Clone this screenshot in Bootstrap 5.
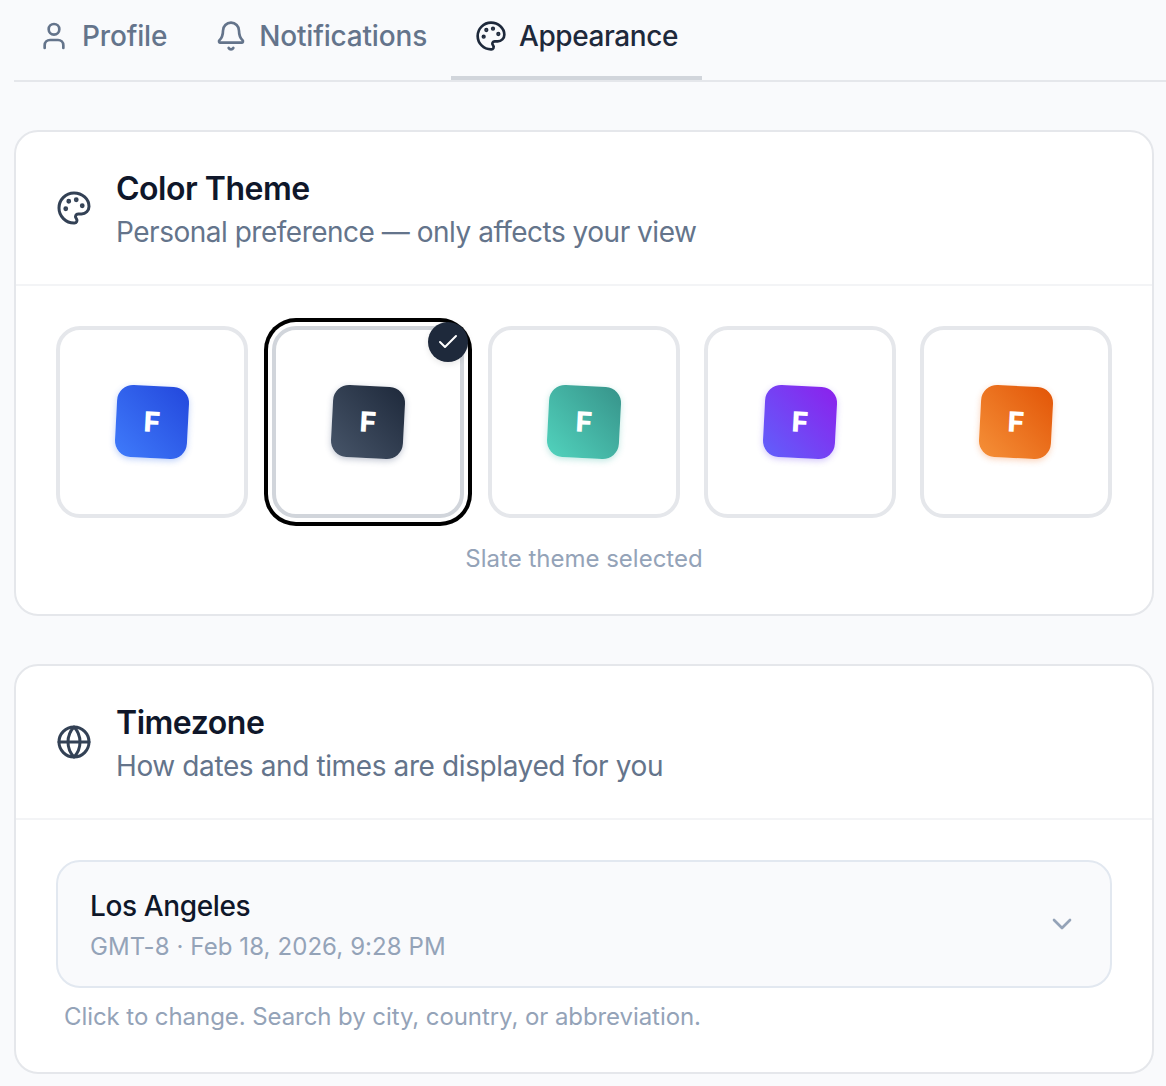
<!DOCTYPE html>
<html lang="en">
<head>
<meta charset="utf-8">
<meta name="viewport" content="width=device-width, initial-scale=1">
<title>Appearance settings</title>
<link href="https://cdn.jsdelivr.net/npm/bootstrap@5.3.0/dist/css/bootstrap.min.css" rel="stylesheet">
<style>
body{background:#f9fafc;font-family:Inter,"Liberation Sans",sans-serif;color:#0f172a;overflow:hidden;padding-left:14px}
.ico{width:32px;height:32px;fill:none;stroke:currentColor;stroke-width:2;stroke-linecap:round;stroke-linejoin:round;flex:none;display:block}
.ico-lg{width:36px;height:36px;color:#334155}
.tab-bar{border-bottom:2px solid #e5e7eb;height:82px;flex-wrap:nowrap}
.tab-item{padding:16px 24px 20px;gap:12px;border:0;border-bottom:4px solid transparent;border-radius:0;font-size:28px;line-height:40px;font-weight:500;color:#64748b;background:none;letter-spacing:-.18px}
.tab-item.active{color:#1e293b;border-bottom-color:#d1d5db;letter-spacing:-.42px}
.panel{width:1140px;border:2px solid #e5e7eb;border-radius:24px;margin-top:48px;background:#fff}
.panel-head{padding:32px 40px;gap:24px;border-bottom:2px solid #f3f4f6}
.panel-main{padding:40px}
.t-title{font-size:32px;line-height:48px;font-weight:600;margin:0;padding-top:1px;height:48px;letter-spacing:-.48px}
.t-sub{font-size:28px;line-height:40px;color:#64748b;margin:0;letter-spacing:-.39px}
.t-sub.tight{letter-spacing:-.49px}
.t-hint{font-size:24px;line-height:32px;color:#94a3b8;margin:0;padding-top:1px;height:32px}
.t-note{letter-spacing:-.075px;margin-top:12px}
.swatches{gap:24px}
.swatch{width:192px;height:192px;border:4px solid #e5e7eb;border-radius:24px;background:#fff;padding:0}
.swatch.chosen{border-color:#d1d5db;box-shadow:0 0 0 4px #fff,0 0 0 8px #000}
.logo-tile{width:72px;height:72px;border-radius:16px;transform:rotate(3deg);color:#fff;font-size:28px;line-height:1;font-weight:800;background:linear-gradient(to top right,var(--a),var(--b));box-shadow:0 2px 6px var(--s)}
.tile-blue{--a:#3f7bfb;--b:#2347dc;--s:rgba(37,99,235,.3)}
.tile-slate{--a:#475569;--b:#1e293b;--s:rgba(51,65,105,.3)}
.tile-teal{--a:#51d3bd;--b:#37938a;--s:rgba(45,180,160,.3)}
.tile-violet{--a:#6060fb;--b:#8c20ec;--s:rgba(110,70,240,.3)}
.tile-orange{--a:#f59038;--b:#e25507;--s:rgba(240,110,30,.3)}
.tick{width:40px;height:40px;top:-8px;right:-8px;background:#1e293b;color:#fff;box-shadow:0 2px 6px rgba(0,0,0,.1)}
.tick .ico{width:24px;height:24px}
.zone{border:2px solid #e2e8f0;border-radius:24px;background:#f9fafc;padding:24px 32px;height:128px;color:#94a3b8}
.zone-name{font-size:28px;line-height:40px;font-weight:500;color:#0f172a;margin-bottom:4px;letter-spacing:-.38px}
.zone .t-hint{letter-spacing:.09px}
</style>
</head>
<body>
<nav class="nav tab-bar">
  <button class="nav-link tab-item d-flex align-items-center"><svg class="ico" viewBox="0 0 24 24"><path d="M19 21v-2a4 4 0 0 0-4-4H9a4 4 0 0 0-4 4v2"/><circle cx="12" cy="7" r="4"/></svg><span>Profile</span></button>
  <button class="nav-link tab-item d-flex align-items-center"><svg class="ico" viewBox="0 0 24 24"><path d="M10.268 21a2 2 0 0 0 3.464 0"/><path d="M3.262 15.326A1 1 0 0 0 4 17h16a1 1 0 0 0 .74-1.673C19.41 13.956 18 12.499 18 8A6 6 0 0 0 6 8c0 4.499-1.411 5.956-2.738 7.326"/></svg><span>Notifications</span></button>
  <button class="nav-link tab-item active d-flex align-items-center"><svg class="ico" viewBox="0 0 24 24"><path d="M12 22a1 1 0 0 1 0-20 10 9 0 0 1 10 9 5 5 0 0 1-5 5h-2.25a1.75 1.75 0 0 0-1.4 2.8l.3.4a1.75 1.75 0 0 1-1.4 2.8z"/><g fill="currentColor"><circle cx="13.5" cy="6.5" r=".6"/><circle cx="17.5" cy="10.5" r=".6"/><circle cx="6.5" cy="12.5" r=".6"/><circle cx="8.5" cy="7.5" r=".6"/></g></svg><span>Appearance</span></button>
</nav>

<section class="panel">
  <div class="panel-head d-flex align-items-center">
    <svg class="ico ico-lg" viewBox="0 0 24 24"><path d="M12 22a1 1 0 0 1 0-20 10 9 0 0 1 10 9 5 5 0 0 1-5 5h-2.25a1.75 1.75 0 0 0-1.4 2.8l.3.4a1.75 1.75 0 0 1-1.4 2.8z"/><g fill="currentColor"><circle cx="13.5" cy="6.5" r=".6"/><circle cx="17.5" cy="10.5" r=".6"/><circle cx="6.5" cy="12.5" r=".6"/><circle cx="8.5" cy="7.5" r=".6"/></g></svg>
    <div><h2 class="t-title">Color Theme</h2><p class="t-sub tight">Personal preference — only affects your view</p></div>
  </div>
  <div class="panel-main">
    <div class="swatches d-flex">
      <button class="swatch d-flex align-items-center justify-content-center"><span class="logo-tile tile-blue d-flex align-items-center justify-content-center">F</span></button>
      <button class="swatch chosen position-relative d-flex align-items-center justify-content-center"><span class="logo-tile tile-slate d-flex align-items-center justify-content-center">F</span><span class="tick position-absolute rounded-circle d-flex align-items-center justify-content-center"><svg class="ico" viewBox="0 0 24 24"><path d="M20 6 9 17l-5-5"/></svg></span></button>
      <button class="swatch d-flex align-items-center justify-content-center"><span class="logo-tile tile-teal d-flex align-items-center justify-content-center">F</span></button>
      <button class="swatch d-flex align-items-center justify-content-center"><span class="logo-tile tile-violet d-flex align-items-center justify-content-center">F</span></button>
      <button class="swatch d-flex align-items-center justify-content-center"><span class="logo-tile tile-orange d-flex align-items-center justify-content-center">F</span></button>
    </div>
    <p class="t-hint text-center mt-4">Slate theme selected</p>
  </div>
</section>

<section class="panel">
  <div class="panel-head d-flex align-items-center">
    <svg class="ico ico-lg" viewBox="0 0 24 24"><circle cx="12" cy="12" r="10"/><path d="M12 2a14.5 14.5 0 0 0 0 20 14.5 14.5 0 0 0 0-20"/><path d="M2 12h20"/></svg>
    <div><h2 class="t-title">Timezone</h2><p class="t-sub">How dates and times are displayed for you</p></div>
  </div>
  <div class="panel-main">
    <button class="zone w-100 text-start d-flex align-items-center justify-content-between">
      <span><span class="zone-name d-block">Los Angeles</span><span class="t-hint d-block">GMT-8 · Feb 18, 2026, 9:28 PM</span></span>
      <svg class="ico" viewBox="0 0 24 24"><path d="m6 9 6 6 6-6"/></svg>
    </button>
    <p class="t-hint t-note px-2">Click to change. Search by city, country, or abbreviation.</p>
  </div>
</section>
<script src="https://cdn.jsdelivr.net/npm/bootstrap@5.3.0/dist/js/bootstrap.bundle.min.js"></script>
</body>
</html>
